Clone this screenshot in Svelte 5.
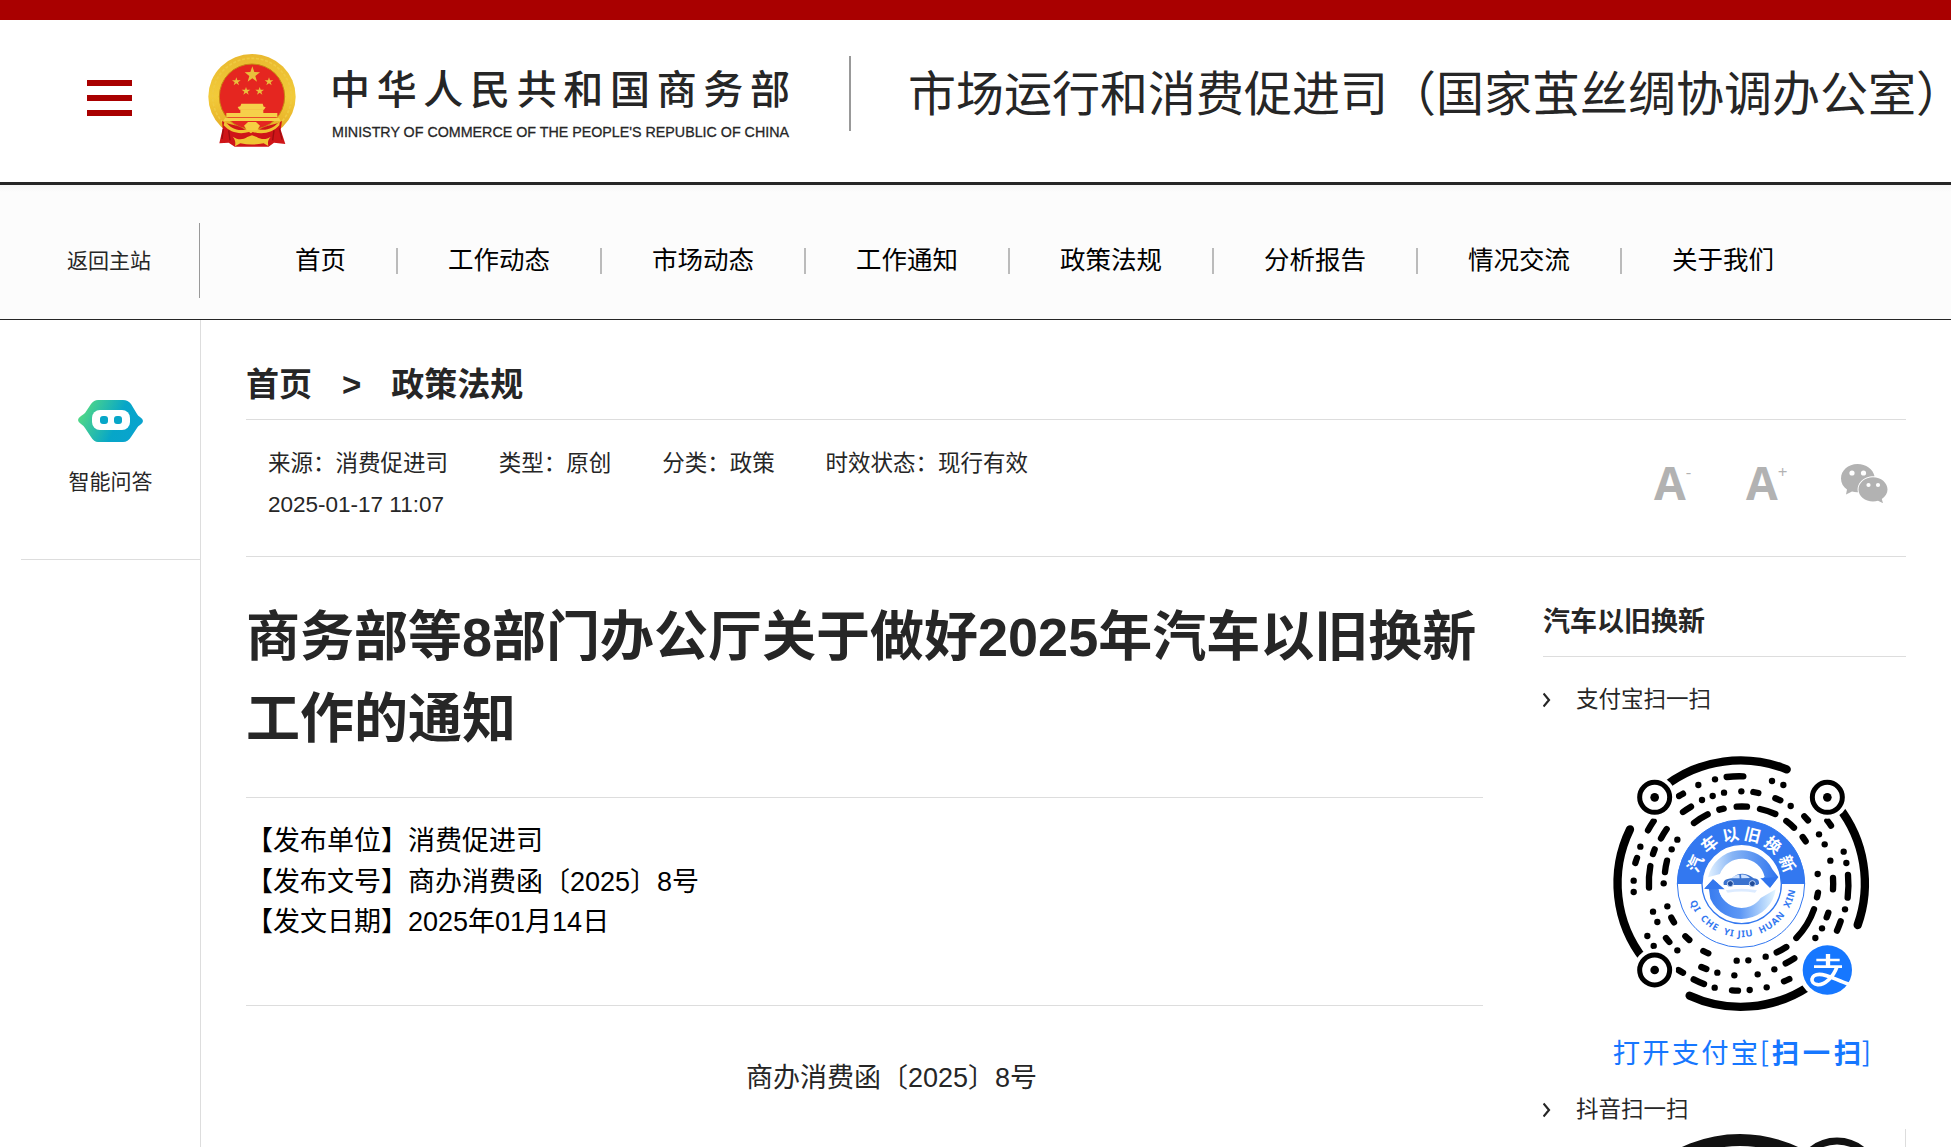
<script lang="ts">
	interface Seg {
		from: [number, number];
		to?: [number, number];
	}

	const navItems = ['首页', '工作动态', '市场动态', '工作通知', '政策法规', '分析报告', '情况交流', '关于我们'];

	const meta = [
		{ label: '来源', value: '消费促进司' },
		{ label: '类型', value: '原创' },
		{ label: '分类', value: '政策' },
		{ label: '时效状态', value: '现行有效' }
	];

	const docInfo = [
		{ label: '发布单位', value: '消费促进司' },
		{ label: '发布文号', value: '商办消费函〔2025〕8号' },
		{ label: '发文日期', value: '2025年01月14日' }
	];

	// centre of the round code
	const CX = 453;
	const CY = 431;

	const outerArcs: Seg[] = [
		{ from: [225, 138], to: [590, 88] },
		{ from: [745, 200], to: [803, 555] },
		{ from: [655, 740], to: [299, 767] },
		{ from: [163, 660], to: [120, 268] }
	];

	const dashes: Seg[] = [
		// top
		{ from: [267, 168], to: [279, 161] },
		{ from: [325, 135] },
		{ from: [375, 118] },
		{ from: [410, 111], to: [460, 109] },
		{ from: [546, 123] },
		{ from: [580, 135] },
		{ from: [336, 180] },
		{ from: [368, 168] },
		{ from: [402, 158] },
		{ from: [454, 154] },
		{ from: [490, 156], to: [505, 159] },
		{ from: [556, 175], to: [571, 181] },
		{ from: [602, 198] },
		{ from: [279, 216], to: [303, 200] },
		{ from: [312, 249], to: [353, 223] },
		{ from: [388, 209], to: [401, 206] },
		{ from: [440, 200], to: [471, 200] },
		{ from: [510, 207], to: [556, 222] },
		{ from: [589, 243], to: [612, 263] },
		// right
		{ from: [643, 229], to: [654, 241] },
		{ from: [712, 242], to: [723, 257] },
		{ from: [687, 283] },
		{ from: [704, 313] },
		{ from: [638, 291], to: [647, 304] },
		{ from: [761, 335] },
		{ from: [769, 369] },
		{ from: [721, 362] },
		{ from: [683, 402] },
		{ from: [729, 414], to: [729, 448] },
		{ from: [774, 405], to: [773, 473] },
		{ from: [765, 508] },
		{ from: [684, 458], to: [681, 472] },
		{ from: [672, 508], to: [619, 594] },
		{ from: [715, 518], to: [710, 532] },
		{ from: [752, 544], to: [741, 572] },
		{ from: [696, 565] },
		{ from: [676, 594] },
		// bottom
		{ from: [589, 621], to: [560, 637] },
		{ from: [527, 650] },
		{ from: [475, 661] },
		{ from: [440, 662] },
		{ from: [355, 640], to: [340, 633] },
		{ from: [613, 655], to: [587, 670] },
		{ from: [553, 688] },
		{ from: [503, 703] },
		{ from: [433, 706] },
		{ from: [382, 698] },
		{ from: [349, 687], to: [334, 681] },
		{ from: [598, 717], to: [582, 724] },
		{ from: [530, 742] },
		{ from: [479, 750] },
		{ from: [444, 752], to: [426, 751] },
		{ from: [374, 743] },
		{ from: [342, 732], to: [311, 718] },
		{ from: [279, 698], to: [265, 690] },
		{ from: [262, 631] },
		{ from: [298, 600], to: [286, 589] },
		{ from: [238, 606], to: [228, 594] },
		{ from: [191, 618] },
		{ from: [172, 588] },
		// left
		{ from: [252, 547], to: [244, 533] },
		{ from: [232, 499] },
		{ from: [202, 546] },
		{ from: [189, 515] },
		{ from: [131, 456] },
		{ from: [131, 422] },
		{ from: [136, 369], to: [141, 354] },
		{ from: [151, 320] },
		{ from: [177, 443], to: [181, 378] },
		{ from: [189, 342], to: [194, 328] },
		{ from: [221, 430] },
		{ from: [225, 396], to: [231, 362] },
		{ from: [245, 328] },
		{ from: [262, 299] },
		{ from: [213, 295], to: [230, 267] },
		{ from: [174, 271], to: [191, 243] }
	];

	const finders = [
		[194, 172],
		[712, 172],
		[194, 690]
	];

	const badgeChars = [
		{ ch: '汽', x: 316, y: 371 },
		{ ch: '车', x: 358, y: 312 },
		{ ch: '以', x: 421, y: 285 },
		{ ch: '旧', x: 488, y: 285 },
		{ ch: '换', x: 549, y: 315 },
		{ ch: '新', x: 592, y: 371 }
	];

	function arc({ from, to }: Seg) {
		const end = to ?? [from[0] + 0.1, from[1]];
		const r = Math.hypot(from[0] - CX, from[1] - CY);
		return `M${from[0]} ${from[1]}A${r.toFixed(1)} ${r.toFixed(1)} 0 0 1 ${end[0]} ${end[1]}`;
	}

	function tilt(x: number, y: number) {
		return (Math.atan2(x - CX, CY - y) * 180) / Math.PI;
	}
</script>

<div class="page">
	<div class="top-bar"></div>

	<header>
		<button class="menu" aria-label="菜单"><i></i><i></i><i></i></button>
		<svg class="emblem" viewBox="55 43 262 279" aria-hidden="true">
			<defs>
				<linearGradient id="gold" x1="0" y1="0" x2="0" y2="1">
					<stop offset="0" stop-color="#e9b92f" />
					<stop offset="0.5" stop-color="#f2cb3a" />
					<stop offset="1" stop-color="#e2a51f" />
				</linearGradient>
			</defs>
			<ellipse cx="186" cy="171" rx="131" ry="128" fill="url(#gold)" />
			<ellipse cx="186" cy="171" rx="118" ry="115" fill="none" stroke="#efca42" stroke-width="5" stroke-dasharray="9 5" />
			<ellipse cx="186" cy="171" rx="98" ry="98" fill="#e52620" stroke="#c98713" stroke-width="3" />
			<g fill="#e9bf3c">
				<path d="M187 80l6 17 17 1-14 11 5 17-14-10-14 10 5-17-14-11 17-1z" />
				<path d="M139 113l3 9 10 0-8 6 3 9-8-6-8 6 3-9-8-6 10 0z" />
				<path d="M237 113l3 9 10 0-8 6 3 9-8-6-8 6 3-9-8-6 10 0z" />
				<path d="M168 142l3 8 10 0-8 6 3 9-8-6-8 6 3-9-8-6 10 0z" />
				<path d="M209 142l3 8 10 0-8 6 3 9-8-6-8 6 3-9-8-6 10 0z" />
			</g>
			<g fill="#f6d04a">
				<path d="M154 192h64l3 9 6 1-5 8H148l-5-8 8-2z" />
				<path d="M151 209h69v11h42v13H109v-13h42zM105 235h162l5 9H100z" />
			</g>
			<path d="M96 244c20 12 52 12 66 24l24 5 24-5c20-12 46-12 66-24l-4 26 14 43-34-4-16 12H134l-18-12-28 2 10-44z" fill="#cf1518" />
			<path d="M104 243c20 28 50 35 76 21l6 3 7-3c26 14 58 4 77-21l-2 14c-19 22-50 29-80 20l-5 4-6-4c-28 8-56 2-76-20z" fill="#f0c433" />
			<path d="M162 258l12-11h24l12 11-9 14h-30z" fill="#f6cf43" />
			<path d="M128 291c16 10 30 10 44 1l14-5 14 5c15 9 30 8 42-1-9 10-9 18-7 28l-14-8c-24 5-46 5-70 0l-16 9c2-12 1-20-7-29z" fill="#f0c433" />
			<path d="M100 268l-4 30M268 266l8 34M116 272l4 30M252 272l-4 30" stroke="#9d0d10" stroke-width="4" fill="none" />
		</svg>
		<svg class="wordmark" viewBox="0 0 460 74" aria-label="中华人民共和国商务部">
			<text class="wm-cn" x="-2" y="36" textLength="460">中华人民共和国商务部</text>
			<text class="wm-en" x="0" y="68.500" textLength="457" lengthAdjust="spacingAndGlyphs">MINISTRY OF COMMERCE OF THE PEOPLE'S REPUBLIC OF CHINA</text>
		</svg>
		<h2 class="department">市场运行和消费促进司（国家茧丝绸协调办公室<span class="half">）</span></h2>
	</header>

	<nav>
		<a class="back" href="#main">返回主站</a>
		<ul>
			{#each navItems as item}
				<li><a href="#main">{item}</a></li>
			{/each}
		</ul>
	</nav>

	<div class="body">
		<aside class="left">
			<div class="assistant">
				<svg viewBox="0 0 65 42" aria-hidden="true">
					<defs>
						<linearGradient id="bot" x1="0" y1="0.3" x2="1" y2="0.6">
							<stop offset="0.05" stop-color="#4fd787" />
							<stop offset="0.62" stop-color="#07a6c8" />
							<stop offset="1" stop-color="#09a3cf" />
						</linearGradient>
					</defs>
					<path d="M20 0h25q5 0 8 4l6 10q1 2 3 3 3 2 3 4t-3 4q-2 1-3 3l-6 9q-3 5-8 5H20q-4 0-7-5l-6-9q-1-2-4-4-3-2-3-4t3-4q3-2 4-3l6-9q3-4 7-4z" fill="url(#bot)" />
					<rect x="14" y="10" width="38" height="20" rx="8" fill="#fff" />
					<rect x="22" y="16" width="8" height="8" rx="3" fill="#07a6c8" />
					<rect x="36" y="16" width="8" height="8" rx="3" fill="#07a6c8" />
				</svg>
				<span>智能问答</span>
			</div>
		</aside>

		<main>
			<div class="crumbs"><span>首页</span><span>&gt;</span><span>政策法规</span></div>

			<div class="meta">
				<div class="meta-text">
					<div class="meta-row">
						{#each meta as m}
							<span>{m.label}：{m.value}</span>
						{/each}
					</div>
					<time>2025-01-17 11:07</time>
				</div>
				<div class="tools">
					<span class="letter">A<sup>-</sup></span>
					<span class="letter">A<sup>+</sup></span>
					<svg viewBox="0 0 48 40" aria-hidden="true">
						<path d="M17.500 1C8 1 1 7.500 1 15.500c0 4.500 2.200 8.300 6 11L6 31.500l6-3c2 .6 4 .9 6 .8-2-9 6-16.500 16.500-16C33 6 26 1 17.500 1z" fill="#b2b2b2" />
						<path d="M47.500 26.500c0-6.800-6.500-12.300-14.500-12.300s-14.500 5.500-14.500 12.300S25 38.500 33 38.500c1.800 0 3.500-.2 5-.7l5 2.400-1.200-4.200c3.500-2.300 5.700-5.600 5.700-9.500z" fill="#b2b2b2" />
						<g fill="#fff">
							<circle cx="12" cy="10" r="2.600" /><circle cx="23.500" cy="10" r="2.600" />
							<circle cx="28.500" cy="22" r="2.100" /><circle cx="38" cy="22" r="2.100" />
						</g>
					</svg>
				</div>
			</div>

			<div class="columns">
				<article>
					<h1>商务部等8部门办公厅关于做好2025年汽车以旧换新工作的通知</h1>
					<div class="doc-info">
						{#each docInfo as d}
							<div>【{d.label}】{d.value}</div>
						{/each}
					</div>
					<p class="doc-no">商办消费函〔2025〕8号</p>
				</article>

				<aside class="right">
					<h3>汽车以旧换新</h3>
					<div class="scan">
						<svg viewBox="0 0 8 16" aria-hidden="true"><path d="M0.500 1.500L6 8L0.500 14.500" /></svg>
						<span>支付宝扫一扫</span>
					</div>
					<svg class="code" viewBox="0 0 900 990">
						<defs>
							<linearGradient id="swirl-a" x1="0" y1="0.500" x2="1" y2="0.500">
								<stop offset="0" stop-color="#e3f2ff" />
								<stop offset="0.350" stop-color="#86b4f5" />
								<stop offset="1" stop-color="#2f74ee" />
							</linearGradient>
							<linearGradient id="swirl-b" x1="1" y1="0.500" x2="0" y2="0.500">
								<stop offset="0" stop-color="#e3f6ff" />
								<stop offset="0.500" stop-color="#5c97f5" />
								<stop offset="1" stop-color="#3478ee" />
							</linearGradient>
							<path id="pinyin" d="M291 453A164 164 0 0 0 615 453" />
						</defs>
						<g class="outer">
							{#each outerArcs as seg}
								<path d={arc(seg)} />
							{/each}
						</g>
						<g class="dots">
							{#each dashes as seg}
								<path d={arc(seg)} />
							{/each}
						</g>
						{#each finders as [x, y]}
							<circle cx={x} cy={y} r="64" fill="#fff" />
							<circle cx={x} cy={y} r="45" fill="none" stroke="#000" stroke-width="15" />
							<circle cx={x} cy={y} r="13" />
						{/each}

						<circle cx="453" cy="431" r="191" fill="#fff" stroke="#3378f0" stroke-width="3" />
						<path d="M261 432a192 192 0 0 1 384 0z" fill="#3378f0" />
						<circle cx="455" cy="432" r="119" fill="#fff" stroke="#3378f0" stroke-width="4" />
						<path d="M354 412A103 103 0 0 1 547 388L565 411L540 443L511 415L524 411A70 70 0 0 0 390 402Z" fill="url(#swirl-a)" />
						<path d="M557 448A103 103 0 0 1 361 476L357 448L343 446L369 418L404 448L387 452A70 70 0 0 0 512 474Z" fill="url(#swirl-b)" />
						<circle cx="454" cy="432" r="70" fill="#fff" />
						<path d="M511 415L565 411L540 443Z" fill="#2f74ee" />
						<path d="M343 446L369 418L404 448Z" fill="#3478ee" />
						<path d="M401 434c-2-9 2-15 12-17l14-3c14-15 38-17 55-5l9 6c12 1 17 6 16 16l-5 4H402z" fill="#3b73cf" />
						<path d="M424 415c9-9 16-11 24-11l1 11zM453 404c12-1 20 3 27 10l-26 1z" fill="#cfe2ff" />
						<g fill="#234d98" stroke="#c2d8fa" stroke-width="3">
							<circle cx="421" cy="431" r="9" /><circle cx="487" cy="431" r="9" />
						</g>
						<path d="M407 451q47-9 94 0l-6 7q-40-7-82 0z" fill="#dcebff" />
						{#each badgeChars as c}
							<text class="badge" x={c.x} y={c.y} transform="rotate({tilt(c.x, c.y)} {c.x} {c.y})" dy="18">{c.ch}</text>
						{/each}
						<text class="pinyin"><textPath href="#pinyin" startOffset="34" textLength="432">QI&nbsp; CHE&nbsp; YI JIU&nbsp; HUAN&nbsp; XIN</textPath></text>

						<circle cx="712" cy="690" r="88" fill="#fff" />
						<circle cx="712" cy="690" r="74" fill="#1677ff" />
						<g class="pay">
							<path d="M679 660h70M672 680h84" stroke-width="8" />
							<path d="M714 642v37" stroke-width="13" />
							<path d="M741 680C730 712 703 736 683 734C657 731 662 703 688 703C714 703 742 722 778 733" stroke-width="11" />
						</g>
						<text class="pay-cap" x="68" y="969" textLength="436">打开支付宝</text>
						<text class="pay-cap" x="509" y="966">[</text>
						<text class="pay-cap bold" x="545" y="969" textLength="268">扫一扫</text>
						<text class="pay-cap" x="815" y="966">]</text>
					</svg>
					<div class="scan second">
						<svg viewBox="0 0 8 16" aria-hidden="true"><path d="M0.500 1.500L6 8L0.500 14.500" /></svg>
						<span>抖音扫一扫</span>
					</div>
					<svg class="code-next" viewBox="0 0 363 18" aria-hidden="true">
						<circle cx="197" cy="141" r="130" fill="none" stroke="#111" stroke-width="12" />
						<circle cx="294" cy="52" r="46" fill="#fff" />
						<circle cx="294" cy="52" r="40" fill="none" stroke="#111" stroke-width="7" />
						<path d="M362.500 0v18" stroke="#ddd" />
					</svg>
				</aside>
			</div>
		</main>
	</div>
</div>

<style>
	:global(body) {
		background: #fff;
	}

	.page {
		width: 1951px;
		height: 1147px;
		overflow: hidden;
		font-family: 'Liberation Sans', 'Noto Sans CJK SC', sans-serif;
		color: #262626;
	}

	.top-bar {
		height: 20px;
		background: #a90000;
	}

	header {
		display: flex;
		align-items: flex-start;
		height: 162px;
		border-bottom: 3px solid #262626;
	}

	header > * {
		flex-shrink: 0;
	}

	.menu {
		display: flex;
		flex-direction: column;
		gap: 9px;
		width: 45px;
		margin: 60px 0 0 87px;
		padding: 0;
		border: none;
		background: none;
	}

	.menu i {
		height: 6px;
		background: #a90000;
	}

	.emblem {
		width: 88px;
		height: 93px;
		margin: 34px 0 0 76px;
	}

	.wordmark {
		width: 460px;
		height: 74px;
		margin: 48px 0 0 36px;
		overflow: visible;
	}

	.wm-cn {
		font-size: 40px;
		font-weight: 500;
		fill: #262626;
	}

	.wm-en {
		font-size: 15.5px;
		fill: #262626;
		stroke: #262626;
		stroke-width: 0.3px;
	}

	.department {
		margin: 36px 0 0 57px;
		padding-left: 57px;
		border-left: 2px solid #999;
		height: 75px;
		line-height: 78px;
		font-size: 48px;
		font-weight: 400;
		white-space: nowrap;
	}

	.half {
		font-feature-settings: 'halt';
	}

	nav {
		display: flex;
		align-items: center;
		height: 135px;
		box-sizing: border-box;
		background: linear-gradient(#f5f5f5, #fcfcfc 7px);
		border-bottom: 1px solid #262626;
	}

	.back {
		box-sizing: border-box;
		width: 200px;
		padding-left: 67px;
		height: 75px;
		margin-top: 17px;
		line-height: 75px;
		font-size: 21px;
		color: #262626;
		text-decoration: none;
		border-right: 1px solid #999;
	}

	nav ul {
		display: flex;
		margin: 18px 0 0 45px;
		padding: 0;
		list-style: none;
	}

	nav li {
		padding: 0 50px;
		height: 26px;
		line-height: 24px;
		font-size: 25.5px;
		border-right: 2px solid #bbb;
	}

	nav li a {
		color: #000;
		text-decoration: none;
	}

	nav li:last-child {
		border-right: none;
	}

	.body {
		display: flex;
		height: 827px;
	}

	.left {
		width: 200px;
		border-right: 1px solid #ddd;
	}

	.assistant {
		display: flex;
		flex-direction: column;
		align-items: center;
		height: 239px;
		margin-left: 21px;
		border-bottom: 1px solid #ddd;
		font-size: 21px;
		line-height: 30px;
	}

	.assistant svg {
		width: 65px;
		height: 42px;
		margin: 80px 0 25px;
	}

	main {
		width: 1660px;
		margin-left: 45px;
	}

	.crumbs {
		display: flex;
		gap: 30px;
		height: 69px;
		padding-top: 30px;
		line-height: 69px;
		font-size: 33px;
		font-weight: 700;
		border-bottom: 1px solid #ddd;
	}

	.meta {
		display: flex;
		justify-content: space-between;
		height: 136px;
		border-bottom: 1px solid #ddd;
	}

	.meta-text {
		padding: 23px 0 0 22px;
		font-size: 22.5px;
		line-height: 42px;
	}

	.meta-row {
		display: flex;
		gap: 50.8px;
	}

	.meta-text time {
		display: block;
		margin-top: -1px;
	}

	.tools {
		display: flex;
		align-items: flex-start;
		padding: 43px 18px 0 0;
	}

	.letter {
		display: flex;
		width: 92px;
		height: 40px;
		line-height: 38px;
		font-family: 'Open Sans', sans-serif;
		font-size: 46px;
		font-weight: 700;
		color: #b2b2b2;
	}

	.letter sup {
		font-size: 17px;
		font-weight: 400;
		line-height: 17px;
	}

	.tools svg {
		width: 48px;
		height: 40px;
		margin-left: 2px;
	}

	.columns {
		display: flex;
		justify-content: space-between;
	}

	article {
		width: 1237px;
	}

	h1 {
		height: 201px;
		margin: 0;
		padding-top: 39px;
		font-size: 54px;
		line-height: 82px;
		border-bottom: 1px solid #ddd;
	}

	.doc-info {
		height: 184px;
		padding-top: 23px;
		font-size: 27px;
		line-height: 40.500px;
		color: #000;
		border-bottom: 1px solid #ddd;
	}

	.doc-no {
		margin: 52px 0 0;
		font-size: 27px;
		line-height: 40.500px;
		text-align: center;
		text-indent: 2em;
	}

	.right {
		width: 363px;
	}

	h3 {
		height: 99px;
		margin: 0;
		line-height: 130px;
		font-size: 27px;
		border-bottom: 1px solid #ddd;
	}

	.scan {
		display: flex;
		align-items: center;
		gap: 25px;
		height: 30px;
		margin-top: 28px;
		font-size: 22.5px;
		line-height: 28px;
	}

	.scan svg {
		width: 8px;
		height: 16px;
		fill: none;
		stroke: #262626;
		stroke-width: 2.2;
	}

	.code {
		display: block;
		width: 300px;
		height: 330px;
		margin: 25px 0 0 47px;
		font-family: 'Noto Sans CJK SC', sans-serif;
	}

	.outer path,
	.dots path {
		fill: none;
		stroke: #000;
		stroke-width: 25;
		stroke-linecap: round;
	}

	.dots path {
		stroke-width: 19;
	}

	.badge {
		font-size: 49px;
		font-weight: 700;
		fill: #fff;
		text-anchor: middle;
	}

	.pinyin {
		font-family: 'Noto Sans', sans-serif;
		font-size: 28px;
		font-weight: 700;
		fill: #3378f0;
	}

	.pay path {
		fill: none;
		stroke: #fff;
	}

	.pay-cap {
		font-size: 82px;
		fill: #1677ff;
	}

	.bold {
		font-weight: 700;
	}

	.scan.second {
		margin-top: 25px;
	}

	.code-next {
		display: block;
		width: 363px;
		height: 18px;
		margin-top: 4px;
	}
</style>
